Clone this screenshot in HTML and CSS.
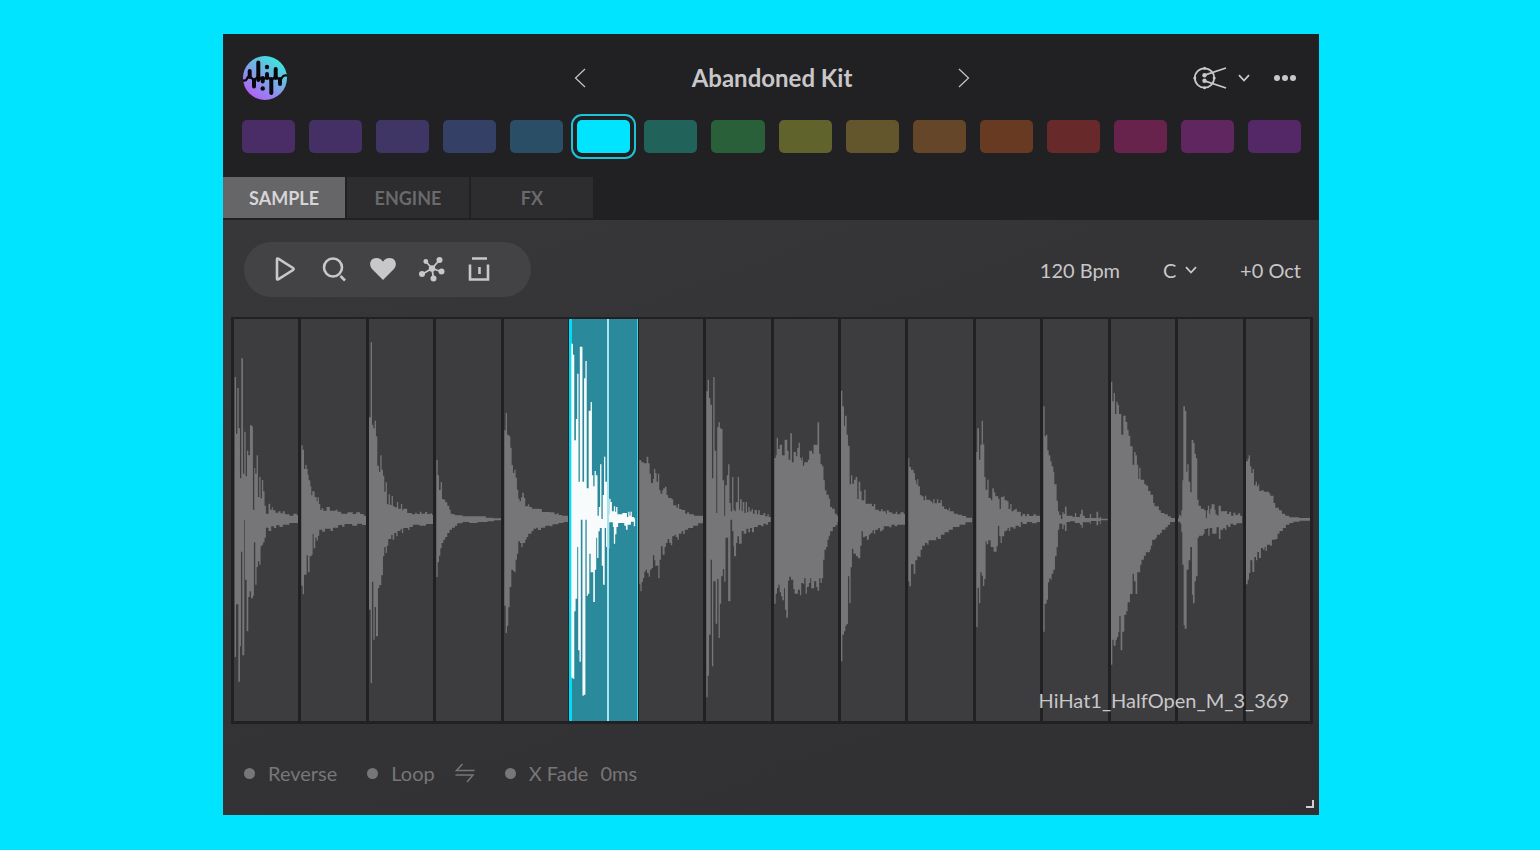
FILE: index.html
```html
<!DOCTYPE html>
<html lang="en">
<head>
<meta charset="utf-8">
<meta name="viewport" content="width=device-width, initial-scale=1">
<title>Abandoned Kit</title>
<link rel="stylesheet" href="styles.css">
</head>
<body>
<main class="plugin">
  <header class="header">
    <div class="topbar">
      <svg class="logo" viewBox="0 0 44 44" role="img" aria-label="Logo">
        <defs>
          <linearGradient id="logo-fill" x1="0.2" y1="0.95" x2="0.8" y2="0.1">
            <stop offset="0" stop-color="#b45cf8"/>
            <stop offset="0.5" stop-color="#7fa3e8"/>
            <stop offset="1" stop-color="#3fe3dc"/>
          </linearGradient>
        </defs>
        <circle cx="22" cy="22" r="22" fill="url(#logo-fill)"/>
        <g fill="none" stroke="#09090c" stroke-linecap="round">
          <path stroke-width="4" d="M6.700 15V21M11 24V30.500M15.300 6.500V24M19.700 22V25.500M24 18V22M28.300 23V37M32.700 13V22M37 23V28"/>
          <path stroke-width="2.200" d="M0.500 24.500Q3.500 25 4.500 21.500L6.700 20L11 24.500L15.300 20L19.700 24.500L24 20L28.300 24.500L32.700 20L37 24.500L39.500 21Q40.500 19 43.500 19.500"/>
        </g>
        <circle cx="24" cy="11" r="2.200" fill="#09090c"/>
        <circle cx="19.700" cy="32.500" r="2.200" fill="#09090c"/>
      </svg>
      <nav class="preset" aria-label="Preset">
        <button class="icon-button" type="button" aria-label="Previous kit"><svg width="12" height="20" viewBox="0 0 12 20"><path class="thin" d="M11 1L1.500 10L11 19"/></svg></button>
        <h1 class="preset-name">Abandoned Kit</h1>
        <button class="icon-button" type="button" aria-label="Next kit"><svg width="12" height="20" viewBox="0 0 12 20"><path class="thin" d="M1 1L10.500 10L1 19"/></svg></button>
      </nav>
      <div class="top-actions">
        <button class="icon-button view-button" type="button" aria-label="View">
          <svg width="34" height="24" viewBox="0 0 34 24">
            <circle class="line" cx="11.500" cy="12" r="9.700"/>
            <path class="line" d="M11.500 9.200L33 2M11.500 14.800L33 22"/>
            <g fill="currentColor"><circle cx="11.500" cy="9.200" r="2.200"/><circle cx="11.500" cy="14.800" r="2.200"/><circle cx="11.500" cy="2.300" r="1.500"/><circle cx="11.500" cy="21.700" r="1.500"/><circle cx="1.800" cy="12" r="1.500"/><circle cx="21.200" cy="12" r="1.500"/></g>
          </svg>
          <svg width="12" height="8" viewBox="0 0 12 8"><path class="line" d="M1 1.200L6 6.500L11 1.200"/></svg>
        </button>
        <button class="icon-button" type="button" aria-label="More"><svg width="24" height="8" viewBox="0 0 24 8" fill="currentColor"><circle cx="4" cy="4" r="3"/><circle cx="12" cy="4" r="3"/><circle cx="20" cy="4" r="3"/></svg></button>
      </div>
    </div>
    <div class="pads">
      <button class="pad pad-1" type="button" aria-label="Pad 1"></button>
      <button class="pad pad-2" type="button" aria-label="Pad 2"></button>
      <button class="pad pad-3" type="button" aria-label="Pad 3"></button>
      <button class="pad pad-4" type="button" aria-label="Pad 4"></button>
      <button class="pad pad-5" type="button" aria-label="Pad 5"></button>
      <button class="pad pad-6 pad-active" type="button" aria-label="Pad 6" aria-pressed="true"></button>
      <button class="pad pad-7" type="button" aria-label="Pad 7"></button>
      <button class="pad pad-8" type="button" aria-label="Pad 8"></button>
      <button class="pad pad-9" type="button" aria-label="Pad 9"></button>
      <button class="pad pad-10" type="button" aria-label="Pad 10"></button>
      <button class="pad pad-11" type="button" aria-label="Pad 11"></button>
      <button class="pad pad-12" type="button" aria-label="Pad 12"></button>
      <button class="pad pad-13" type="button" aria-label="Pad 13"></button>
      <button class="pad pad-14" type="button" aria-label="Pad 14"></button>
      <button class="pad pad-15" type="button" aria-label="Pad 15"></button>
      <button class="pad pad-16" type="button" aria-label="Pad 16"></button>
    </div>
    <div class="tabs" role="tablist">
      <button class="tab tab-active" type="button" role="tab" aria-selected="true">SAMPLE</button>
      <button class="tab" type="button" role="tab" aria-selected="false">ENGINE</button>
      <button class="tab" type="button" role="tab" aria-selected="false">FX</button>
    </div>
  </header>

  <section class="toolbar">
    <div class="tools">
      <button class="tool" type="button" aria-label="Play"><svg width="28" height="28" viewBox="0 0 28 28"><path class="bold" d="M6 4.200V23.800Q6 25 7.200 24.300L22 15Q23.300 14 22 13L7.200 3.700Q6 3 6 4.200Z"/></svg></button>
      <button class="tool" type="button" aria-label="Search"><svg width="28" height="28" viewBox="0 0 28 28"><circle class="bold" cx="13" cy="12.500" r="9"/><path class="bold" d="M20.500 21L25 25.500"/></svg></button>
      <button class="tool" type="button" aria-label="Favourite"><svg width="28" height="28" viewBox="0 0 28 28"><path fill="currentColor" d="M14 25L3.300 14.200C-0.800 10 1.200 3 7.300 3C10.500 3 12.800 4.600 14 6.800C15.200 4.600 17.500 3 20.700 3C26.800 3 28.800 10 24.700 14.200Z"/></svg></button>
      <button class="tool" type="button" aria-label="Similar samples"><svg width="28" height="28" viewBox="0 0 28 28"><path class="line" d="M14 13.500L8 6.500M14 13.500L21.500 5M14 13.500L23 16.500M14 13.500L15.500 23.500M14 13.500L4.500 19"/><g fill="currentColor"><circle cx="14" cy="13.500" r="3.200"/><circle cx="7.800" cy="6.500" r="2.400"/><circle cx="21.500" cy="5" r="3"/><circle cx="23.500" cy="16.500" r="3"/><circle cx="15.500" cy="23.500" r="3"/><circle cx="4" cy="19" r="3"/></g></svg></button>
      <button class="tool" type="button" aria-label="Delete"><svg width="28" height="28" viewBox="0 0 28 28"><path class="bold" d="M5 3.500H20M3 9.500V24.500H21V9.500M12.500 12V19"/></svg></button>
    </div>
    <div class="values">
      <span>120 Bpm</span>
      <label class="key">
        <select class="key-select" aria-label="Key"><option>C</option><option>D</option><option>E</option></select>
        <svg width="12" height="8" viewBox="0 0 12 8"><path class="line" d="M1 1.200L6 6.500L11 1.200"/></svg>
      </label>
      <span>+0 Oct</span>
    </div>
  </section>

  <section class="wave" aria-label="Waveform">
    <div class="slice"><svg class="shape" viewBox="33 28 194 1206" preserveAspectRatio="none"><path d="M35 630V202H39V372H43V235H47V356H51V506H55V146H60V492H64V366H68V500H72V423H76V437H81V347H88V352H90V600H94V475H97V492H101V437H105V562H109V502H113V566H117V511H121V545H125V588H129V612H137V582H142V600H147V593H150V602H158V609H167V605H173V611H180V605H186V614H200V618H212V612H222V616H232V630ZM35 630V1042H39V884H46V1116H51V1010H54V726H58V1037H64V630H66V810H71V965H76V862H80V845H84V866H90V858H93V698H97V825H101V772H105V755H109V765H113V710H117V705H121V697H125V684H129V654H137V664H145V650H153V655H160V647H170V652H180V645H200V640H225V642H232V630Z"/></svg></div>
    <div class="slice"><svg class="shape" viewBox="236 28 194 1206" preserveAspectRatio="none"><path d="M237 630V407H241V420H245V478H249V466H253V478H256V495H259V512H264V530H267V557H270V545H277V562H283V575H286V563H290V583H294V601H298V596H303V603H313V592H323V603H340V600H346V606H357V612H376V608H392V613H402V608H414V613H425V618H432V630ZM237 630V828H241V854H245V795H253V737H257V788H262V740H268V735H271V673H274V716H279V684H283V693H287V678H291V660H300V666H308V657H325V664H332V654H348V646H360V651H367V643H390V648H405V642H420V646H432V630Z"/></svg></div>
    <div class="slice"><svg class="shape" viewBox="438 28 194 1206" preserveAspectRatio="none"><path d="M438 630V323H443V98H447V345H451V356H455V333H459V380H463V468H468V486H472V437H476V480H480V498H484V546H488V518H492V584H497V554H501V586H506V559H510V590H515V593H522V577H526V597H534V583H538V602H541V597H553V610H567V614H577V609H582V613H591V606H596V612H607V607H613V613H623V611H628V616H636V630ZM438 630V900H443V1120H447V816H451V990H455V892H459V980H465V835H469V826H475V797H480V740H484V712H488V730H492V708H496V688H505V676H509V690H514V670H520V680H524V664H533V658H537V670H541V655H556V661H560V652H570V645H590V648H610V643H636V630Z"/></svg></div>
    <div class="slice"><svg class="shape" viewBox="640 28 194 1206" preserveAspectRatio="none"><path d="M641 630V450H645V497H649V541H654V517H658V568H663V570H668V578H674V588H680V600H684V612H690V614H697V617H720V620H790V624H812V626H836V630ZM641 630V802H645V758H649V738H653V716H657V700H662V690H668V682H674V670H681V660H688V654H697V648H704V641H720V637H740V640H765V637H795V635H815V632H836V630Z"/></svg></div>
    <div class="slice"><svg class="shape" viewBox="11 28 194 1206" preserveAspectRatio="none"><path d="M12 630V362H16V310H20V375H26V380H30V414H34V466H38V490H42V480H46V504H50V540H54V567H58V575H62V563H66V549H71V565H75V590H83V584H87V592H95V597H117V598H125V607H148V608H163V614H171V610H175V616H186V618H206V630ZM12 630V888H16V970H20V948H24V893H28V832H33V780H38V784H42V788H46V750H50V732H54V695H59V700H63V712H67V700H75V690H79V682H84V672H94V664H100V657H108V654H113V661H122V654H135V648H150V650H157V644H175V640H190V637H206V630Z"/></svg></div>
    <div class="slice slice-active"><svg class="shape" viewBox="212 28 197 1206" preserveAspectRatio="none"><path d="M213 630V102H218V135H222V392H227V328H231V192H235V516H239V111H247V516H252V206H256V154H260V536H266V303H272V277H276V497H280V530H284V484H288V497H293V618H297V592H301V464H305V628H309V556H313V441H317V516H325V614H329V567H333V577H337V605H343V590H347V606H350V592H354V614H369V610H383V622H387V606H391V618H394V606H398V622H405V626H408V630ZM213 630V1104H217V1107H222V905H226V867H231V712H234V1022H238V1056H242V630H247V1158H251V1155H256V630H260V858H264V852H268V732H272V788H280V877H285V780H289V684H292V745H296V665H300V655H306V768H310V825H315V655H319V712H325V717H329V638H340V652H343V702H347V674H351V652H356V640H375V648H380V660H385V645H395V636H404V650H408V630Z"/></svg><span class="playhead"></span></div>
    <div class="slice"><svg class="shape" viewBox="417 28 194 1206" preserveAspectRatio="none"><path d="M418 630V451H424V458H432V461H440V441H445V461H449V492H453V520H459V508H462V478H466V490H470V516H474V492H478V542H482V552H487V542H490V536H495V531H500V556H505V565H515V569H520V587H530V594H534V583H538V598H545V601H556V612H562V608H568V614H582V618H610V630ZM418 630V822H421V845H425V817H429V805H433V786H437V780H441V790H446V801H450V780H455V775H459V736H463V752H466V768H475V806H479V750H483V710H488V735H494V712H498V700H503V688H508V700H513V707H517V680H524V675H528V682H533V690H537V672H545V665H550V673H555V660H565V655H580V648H595V641H610V630Z"/></svg></div>
    <div class="slice"><svg class="shape" viewBox="618 28 195 1206" preserveAspectRatio="none"><path d="M619 630V245H623V210H627V265H631V285H636V506H640V202H644V423H649V610H652V352H656V338H660V356H664V358H668V512H673V618H676V527H681V497H685V464H689V580H693V605H697V502H701V600H705V605H708V578H714V502H718V600H721V569H726V605H729V577H734V610H738V577H742V608H746V592H750V605H756V598H760V612H765V601H772V614H776V602H781V616H792V610H797V620H804V614H808V622H814V630ZM619 630V1163H623V1098H627V975H632V750H636V1070H640V815H647V942H652V808H656V985H660V882H664V800H669V778H673V816H677V684H685V875H692V625H697V664H701V710H703V740H709V700H713V680H718V702H726V664H732V672H740V657H746V668H751V655H757V668H763V652H775V646H785V650H792V642H800V645H806V637H814V630Z"/></svg></div>
    <div class="slice"><svg class="shape" viewBox="11 28 194 1206" preserveAspectRatio="none"><path d="M12 630V445H16V437H19V384H23V418H28V405H35V437H43V390H51V423H55V450H60V371H65V458H70V427H77V440H81V415H85V399H89V444H93V452H96V442H98V468H102V458H113V450H117V423H126V432H130V405H142V338H147V432H151V464H156V470H160V512H164V542H169V555H176V567H180V592H186V597H194V612H200V618H205V630ZM12 630V882H16V852H20V835H24V825H28V848H32V860H36V872H41V836H44V900H48V924H53V813H57V801H62V810H69V838H73V852H83V840H89V857H93V820H98V822H102V806H106V852H110V832H116V820H120V806H123V836H132V815H138V832H142V843H147V806H151V820H155V806H159V750H163V720H168V712H172V690H176V678H180V665H188V652H196V647H202V637H205V630Z"/></svg></div>
    <div class="slice"><svg class="shape" viewBox="213 28 194 1206" preserveAspectRatio="none"><path d="M213 630V243H217V290H222V348H225V318H230V375H234V408H239V524H243V497H247V522H252V510H257V502H262V568H266V516H271V545H275V572H283V540H287V582H306V590H312V583H316V600H327V605H334V598H338V605H348V612H351V602H357V608H367V612H378V606H382V614H392V608H402V613H408V630ZM213 630V1055H217V975H222V965H226V948H230V943H234V800H238V881H242V773H246V717H250V732H258V740H264V746H271V708H275V665H279V683H285V680H291V690H297V675H302V670H308V662H312V672H316V660H325V655H330V665H337V660H342V650H358V653H365V645H375V650H382V645H408V630Z"/></svg></div>
    <div class="slice"><svg class="shape" viewBox="415 28 194 1206" preserveAspectRatio="none"><path d="M416 630V445H419V472H424V480H432V490H436V512H440V524H443V508H446V530H451V556H456V560H462V572H466V558H470V570H482V575H488V581H491V568H495V581H502V569H506V580H513V571H517V590H524V598H533V602H538V594H541V605H553V612H565V615H578V619H590V624H608V630ZM416 630V815H419V830H424V764H432V792H437V752H443V740H448V742H453V720H458V708H466V700H473V705H477V692H500V683H505V688H514V675H525V668H538V660H550V652H570V645H588V638H608V630Z"/></svg></div>
    <div class="slice"><svg class="shape" viewBox="617 28 194 1206" preserveAspectRatio="none"><path d="M618 630V427H621V356H626V450H630V405H634V333H638V404H642V502H646V540H651V510H655V565H662V572H666V536H671V548H675V560H684V568H688V598H692V562H700V558H703V572H711V575H715V598H720V583H724V605H730V600H736V597H740V606H752V620H757V613H765V620H770V613H777V619H790V614H797V618H810V630ZM618 630V952H622V834H626V881H630V788H634V798H638V829H642V808H646V695H649V704H654V692H661V712H670V726H679V710H683V648H687V680H691V700H695V680H702V665H708V662H712V655H716V664H720V653H730V657H736V648H746V652H752V637H757V643H770V637H785V641H800V637H810V630Z"/></svg></div>
    <div class="slice"><svg class="shape" viewBox="9 28 194 1206" preserveAspectRatio="none"><path d="M10 630V290H14V380H18V375H22V422H26V437H31V455H35V470H40V486H43V524H50V573H54V605H58V616H63V628H67V608H71V613H75V591H80V618H98V622H105V610H109V622H120V614H124V600H129V618H135V625H150V613H154V625H170V606H175V626H180V622H184V627H204V630ZM10 630V966H14V882H20V870H24V818H28V806H32V810H35V792H40V780H45V740H50V712H54V660H58V642H67V658H71V645H75V664H80V637H90V635H105V640H120V645H125V654H129V638H150V642H153V634H170V647H175V634H180V642H183V632H204V630Z"/></svg></div>
    <div class="slice"><svg class="shape" viewBox="212 28 194 1206" preserveAspectRatio="none"><path d="M212 630V216H216V275H220V250H224V313H228V276H232V285H236V313H243V375H249V318H256V337H261V360H265V378H270V410H277V465H282V427H286V437H290V465H294V508H297V474H301V510H312V524H318V528H324V544H331V555H339V580H343V590H356V602H362V610H373V614H383V620H392V625H405V630ZM212 630V1065H216V990H220V1008H226V990H230V982H234V967H237V920H241V1022H246V966H252V915H258V905H262V878H269V853H277V792H281V815H286V853H291V788H300V765H304V750H311V738H317V728H329V720H332V708H336V690H346V685H350V675H360V670H365V660H376V653H383V645H390V637H405V630Z"/></svg></div>
    <div class="slice"><svg class="shape" viewBox="414 28 194 1206" preserveAspectRatio="none"><path d="M414 630V626H417V615H421V620H424V602H427V512H430V290H435V304H439V486H442V464H446V516H451V548H455V391H460V400H464V432H468V446H472V570H476V588H483V597H493V602H498V626H501V602H504V588H508V612H511V597H515V584H524V600H527V614H532V618H536V588H543V605H557V604H562V613H568V606H574V618H581V609H587V616H595V611H601V618H607V630ZM414 630V636H421V642H424V668H427V765H431V946H434V957H440V780H446V752H451V712H456V855H459V881H464V815H468V800H473V684H477V678H490V672H494V658H502V655H505V678H509V655H517V672H530V653H537V688H542V660H550V655H555V660H560V646H565V652H572V642H580V646H590V641H607V630Z"/></svg></div>
    <div class="slice"><svg class="shape" viewBox="617 28 194 1206" preserveAspectRatio="none"><path d="M617 630V455H622V447H625V437H629V470H633V490H637V478H641V527H646V516H650V530H654V524H657V544H664V541H670V546H686V551H690V558H700V580H705V594H716V602H725V612H735V618H747V623H777V625H814V630ZM617 630V824H622V810H626V790H630V752H636V787H642V742H647V752H651V727H656V745H662V715H668V720H673V712H676V724H680V705H690V708H695V690H706V688H712V672H718V664H728V655H737V645H748V640H760V636H778V633H814V630Z"/></svg></div>
    <p class="sample-name">HiHat1_HalfOpen_M_3_369</p>
  </section>

  <footer class="footer">
    <label class="option"><input class="dot" type="checkbox">Reverse</label>
    <div class="group">
      <label class="option"><input class="dot" type="checkbox">Loop</label>
      <button class="icon-button loop-mode" type="button" aria-label="Loop direction"><svg width="20" height="20" viewBox="0 0 20 20"><path class="fine" d="M7.500 1L1.500 7.500H19.500M0.500 12H18L12 19"/></svg></button>
    </div>
    <div class="group group-fade">
      <label class="option"><input class="dot" type="checkbox">X Fade</label>
      <span>0ms</span>
    </div>
    <svg class="resize" width="8" height="8" viewBox="0 0 8 8"><path d="M7 0V7H0" fill="none" stroke="#cfcfcf" stroke-width="2"/></svg>
  </footer>
</main>
</body>
</html>
```
FILE: styles.css
```css
* {
  box-sizing: border-box;
}

body {
  margin: 0;
  min-height: 100vh;
  padding: 34px 221px 35px 223px;
  display: flex;
  background: #00e4ff;
  font-family: Lato, "Open Sans", sans-serif;
  font-size: 20px;
  line-height: 28px;
  color: #c8c7c9;
}

button,
select {
  margin: 0;
  padding: 0;
  border: 0;
  background: none;
  font: inherit;
  color: inherit;
  cursor: pointer;
}

svg {
  display: block;
}

.thin,
.fine,
.line,
.bold {
  fill: none;
  stroke: currentColor;
}

.thin {
  stroke-width: 1.2;
}

.fine {
  stroke-width: 1.5;
}

.line {
  stroke-width: 1.8;
}

.bold {
  stroke-width: 2.6;
}

.plugin {
  flex: 1;
  min-width: 0;
  display: flex;
  flex-direction: column;
  background: linear-gradient(160deg, #39383a 0%, #343335 50%, #302f31 100%);
}

.header {
  background: #212022;
  padding-bottom: 2px;
}

.topbar {
  display: grid;
  grid-template-columns: 1fr 396px 1fr;
  align-items: center;
  padding: 22px 18px 0 20px;
}

.logo {
  width: 44px;
  height: 44px;
}

.preset {
  display: flex;
  align-items: center;
  justify-content: space-between;
}

.preset-name {
  margin: 0;
  font-size: 24px;
  font-weight: 700;
}

.icon-button {
  display: flex;
  align-items: center;
}

.top-actions {
  display: flex;
  justify-content: flex-end;
  align-items: center;
  gap: 23px;
  padding-right: 4px;
}

.view-button {
  gap: 11px;
}

.pads {
  display: grid;
  grid-template-columns: repeat(16, 1fr);
  gap: 14px;
  padding: 20px 18px 24px 19px;
}

.pad {
  height: 33px;
  border-radius: 5px;
}

.pad-active {
  outline: 2px solid #1fc3d6;
  outline-offset: 4px;
}

.pad-1 { background: #4a2d66; }
.pad-2 { background: #453066; }
.pad-3 { background: #403665; }
.pad-4 { background: #344066; }
.pad-5 { background: #2b4e67; }
.pad-6 { background: #00e4ff; }
.pad-7 { background: #21625b; }
.pad-8 { background: #296039; }
.pad-9 { background: #61632d; }
.pad-10 { background: #64562c; }
.pad-11 { background: #664628; }
.pad-12 { background: #683a22; }
.pad-13 { background: #68292b; }
.pad-14 { background: #68234c; }
.pad-15 { background: #5f265f; }
.pad-16 { background: #542866; }

.tabs {
  display: flex;
  gap: 2px;
}

.tab {
  width: 122px;
  height: 41px;
  background: #2d2c2e;
  color: #6a696b;
  font-size: 18px;
  font-weight: 700;
}

.tab-active {
  background: #666567;
  color: #d6d5d7;
}

.toolbar {
  display: flex;
  align-items: center;
  justify-content: space-between;
  padding: 22px 18px 20px 21px;
}

.tools {
  display: flex;
  gap: 21px;
  padding: 13px 36px 14px 27px;
  border-radius: 28px;
  background: #434244;
}

.tool {
  height: 28px;
}

.values {
  display: flex;
  gap: 43px;
}

.key {
  display: flex;
  align-items: center;
  gap: 7px;
}

.key-select {
  appearance: none;
  width: 15px;
  height: 28px;
}

.wave {
  position: relative;
  flex: 1;
  min-height: 200px;
  display: grid;
  grid-template-columns: repeat(16, 1fr);
  gap: 3px;
  margin: 0 6px 0 8px;
  padding: 2px 3px 3px;
  background: #212022;
}

.slice {
  position: relative;
  min-width: 0;
  min-height: 0;
  background: #3d3c3e;
}

.shape {
  position: absolute;
  width: 100%;
  height: 100%;
  fill: #767577;
}

.slice-active {
  background: #2a8a9b;
}

.slice-active::before {
  content: "";
  position: absolute;
  top: 0;
  bottom: 0;
  left: -2px;
  right: -2px;
  background: #2a8a9b;
  border-left: 3px solid #00dcf8;
  border-right: 1px solid #3fd4e2;
}

.slice-active .shape {
  fill: #f8fbfc;
}

.playhead {
  position: absolute;
  top: 0;
  bottom: 0;
  left: 56%;
  width: 2px;
  background: #a6e6ec;
}

.sample-name {
  position: absolute;
  right: 24px;
  bottom: 10px;
  margin: 0;
}

.footer {
  position: relative;
  display: flex;
  gap: 30px;
  padding: 35px 21px 28px;
  color: #777678;
}

.option,
.group {
  display: flex;
  align-items: center;
}

.option {
  gap: 13px;
}

.group {
  gap: 20px;
}

.group-fade {
  gap: 12px;
}

.dot {
  appearance: none;
  width: 11px;
  height: 11px;
  margin: 0;
  border-radius: 50%;
  background: #777678;
}

.resize {
  position: absolute;
  right: 5px;
  bottom: 7px;
}
```
